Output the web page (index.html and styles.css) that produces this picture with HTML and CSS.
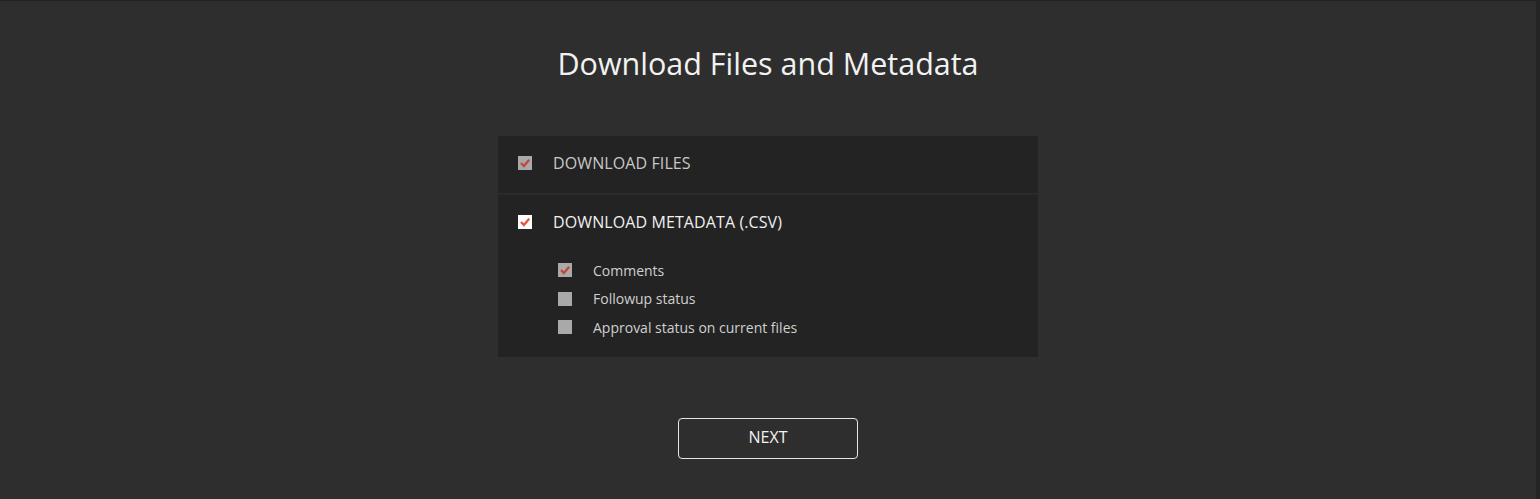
FILE: index.html
```html
<!DOCTYPE html>
<html>
<head>
<meta charset="utf-8">
<link rel="stylesheet" href="styles.css">
</head>
<body>
<div class="page">
  <h1 class="title">Download Files and Metadata</h1>
  <div class="panel">
    <div class="row row1">
      <span class="cb cb-gray"><svg viewBox="0 0 14 14"><path d="M3 7 L5.9 10 L11.2 3.8" fill="none" stroke="#c4473a" stroke-width="2.3"/></svg></span>
      <span class="label dim">DOWNLOAD FILES</span>
    </div>
    <div class="divider"></div>
    <div class="section">
      <div class="row row2">
        <span class="cb cb-white"><svg viewBox="0 0 14 14"><path d="M3 7 L5.9 10 L11.2 3.8" fill="none" stroke="#e8533a" stroke-width="2.3"/></svg></span>
        <span class="label">DOWNLOAD METADATA (.CSV)</span>
      </div>
      <div class="subs">
        <div class="sub">
          <span class="cb cb-gray"><svg viewBox="0 0 14 14"><path d="M3 7 L5.9 10 L11.2 3.8" fill="none" stroke="#c4473a" stroke-width="2.3"/></svg></span>
          <span class="sublabel">Comments</span>
        </div>
        <div class="sub">
          <span class="cb cb-gray"></span>
          <span class="sublabel">Followup status</span>
        </div>
        <div class="sub">
          <span class="cb cb-gray"></span>
          <span class="sublabel">Approval status on current files</span>
        </div>
      </div>
    </div>
  </div>
  <button class="next">NEXT</button>
</div>
</body>
</html>
```

FILE: styles.css
```css
html, body {
  margin: 0;
  padding: 0;
  height: 100%;
  background: #2e2e2e;
}
body {
  font-family: "Open Sans", "Noto Sans", sans-serif;
  color: #eee;
  border-top: 1px solid #222;
  border-right: 4px solid #242424;
  box-sizing: border-box;
}
.page {
  display: flex;
  flex-direction: column;
  align-items: center;
}
.title {
  margin: 42px 0 0;
  font-weight: 400;
  font-size: 30.5px;
  line-height: 40px;
  color: #f2f2f2;
}
.panel {
  margin-top: 53px;
  width: 540px;
  background: #232323;
  display: flex;
  flex-direction: column;
}
.row {
  display: flex;
  align-items: center;
  box-sizing: border-box;
  padding-left: 20px;
}
.row1 {
  height: 57px;
  padding-bottom: 3px;
}
.row2 {
  height: 55px;
  padding-bottom: 1px;
}
.divider {
  height: 2px;
  background: #2b2b2b;
}
.cb {
  width: 14px;
  height: 14px;
  display: inline-flex;
  flex: none;
}
.cb svg {
  width: 14px;
  height: 14px;
}
.cb-gray { background: #a9a9a9; }
.cb-white { background: #ffffff; }
.label {
  margin-left: 21px;
  font-size: 16px;
  letter-spacing: 0.1px;
  color: #f0f0f0;
}
.label.dim { color: #c8c8c8; }
.subs {
  display: flex;
  flex-direction: column;
  padding: 13px 0 23px 60px;
  gap: 14.5px;
}
.sub {
  display: flex;
  align-items: center;
  height: 14px;
}
.sublabel {
  margin-left: 21px;
  font-size: 14px;
  color: #d0d0d0;
}
.next {
  margin-top: 61px;
  width: 180px;
  height: 41px;
  padding: 0 0 4px;
  background: transparent;
  border: 1px solid #e6e6e6;
  border-radius: 4px;
  color: #f2f2f2;
  font-family: "Open Sans", "Noto Sans", sans-serif;
  font-size: 16px;
  cursor: pointer;
}
```
